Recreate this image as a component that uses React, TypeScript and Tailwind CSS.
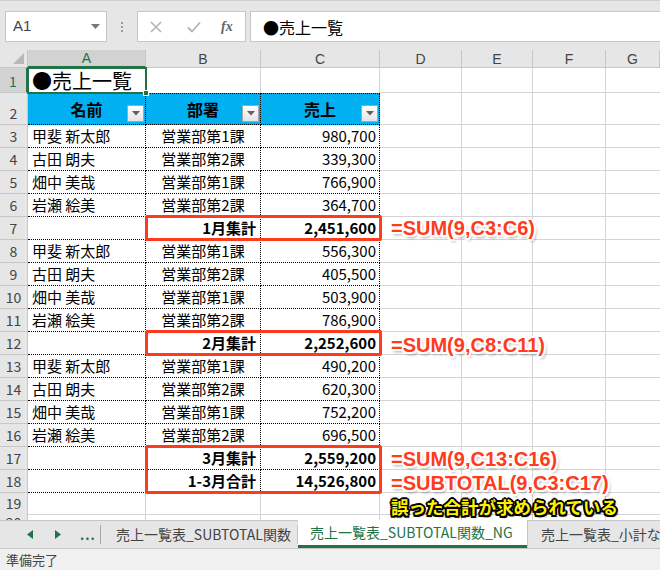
import React from 'react';

type Row = {
    n: number;
    h: string;
    a?: string;
    b?: string;
    c?: string;
    kind: 'title' | 'head' | 'data' | 'total' | 'blank';
};

const rows: Row[] = [
    { n: 1, h: 'h-[25px]', kind: 'title' },
    { n: 2, h: 'h-[32px]', kind: 'head', a: '名前', b: '部署', c: '売上' },
    { n: 3, h: 'h-[23px]', kind: 'data', a: '甲斐 新太郎', b: '営業部第1課', c: '980,700' },
    { n: 4, h: 'h-[23px]', kind: 'data', a: '古田 朗夫', b: '営業部第2課', c: '339,300' },
    { n: 5, h: 'h-[23px]', kind: 'data', a: '畑中 美哉', b: '営業部第1課', c: '766,900' },
    { n: 6, h: 'h-[23px]', kind: 'data', a: '岩瀬 絵美', b: '営業部第2課', c: '364,700' },
    { n: 7, h: 'h-[23px]', kind: 'total', b: '1月集計', c: '2,451,600' },
    { n: 8, h: 'h-[23px]', kind: 'data', a: '甲斐 新太郎', b: '営業部第1課', c: '556,300' },
    { n: 9, h: 'h-[23px]', kind: 'data', a: '古田 朗夫', b: '営業部第2課', c: '405,500' },
    { n: 10, h: 'h-[23px]', kind: 'data', a: '畑中 美哉', b: '営業部第1課', c: '503,900' },
    { n: 11, h: 'h-[23px]', kind: 'data', a: '岩瀬 絵美', b: '営業部第2課', c: '786,900' },
    { n: 12, h: 'h-[23px]', kind: 'total', b: '2月集計', c: '2,252,600' },
    { n: 13, h: 'h-[23px]', kind: 'data', a: '甲斐 新太郎', b: '営業部第1課', c: '490,200' },
    { n: 14, h: 'h-[23px]', kind: 'data', a: '古田 朗夫', b: '営業部第2課', c: '620,300' },
    { n: 15, h: 'h-[23px]', kind: 'data', a: '畑中 美哉', b: '営業部第1課', c: '752,200' },
    { n: 16, h: 'h-[23px]', kind: 'data', a: '岩瀬 絵美', b: '営業部第2課', c: '696,500' },
    { n: 17, h: 'h-[23px]', kind: 'total', b: '3月集計', c: '2,559,200' },
    { n: 18, h: 'h-[23px]', kind: 'total', b: '1-3月合計', c: '14,526,800' },
    { n: 19, h: 'h-[18px]', kind: 'blank' },
    { n: 20, h: 'h-[23px]', kind: 'blank' },
];

const cols = ['A', 'B', 'C', 'D', 'E', 'F', 'G'];

const grid = 'grid grid-cols-[28px_118px_115px_119px_82px_71px_73px_1fr]';

function FilterButton() {
    return (
        <div className="absolute right-[1px] bottom-[2px] w-[17px] h-[17px] border border-[#a6a6a6] bg-gradient-to-b from-white to-[#e4e4e4] flex items-center justify-center">
            <svg width="8" height="5" viewBox="0 0 8 5">
                <path d="M0 0h8L4 4.5z" fill="#5f5f5f" />
            </svg>
        </div>
    );
}

function SheetRow({ row }: { row: Row }) {
    const inTable = row.kind === 'head' || row.kind === 'data' || row.kind === 'total';
    const selected = row.n === 1;
    const gray = 'border-r border-b border-[#d4d4d4]';
    const dotted = 'border-r border-b border-dotted border-black';
    const tableCell = row.kind === 'head' ? `${dotted} border-t bg-[#00b0f0]` : dotted;

    return (
        <div className={`${grid} ${row.h}`}>
            <div
                className={`flex items-end justify-center pb-[1px] text-[14px] leading-[20px] border-b border-[#c6c6c6] ${
                    selected
                        ? 'bg-[#d2d2d2] text-[#217346] border-r-2 border-r-[#217346]'
                        : 'bg-[#e6e6e6] text-[#444] border-r border-r-[#c6c6c6]'
                }`}
            >
                {row.n}
            </div>

            {/* A */}
            {row.kind === 'title' ? (
                <div className="border-r border-[#d4d4d4] flex items-end pl-[4px] text-[20px] leading-[24px] text-black">
                    ●売上一覧
                </div>
            ) : inTable ? (
                <div className={`${tableCell} relative flex items-end text-[15px] leading-[20px] pb-[1px] ${row.kind === 'head' ? 'justify-center font-bold text-[16px] pb-[5px]' : 'pl-[4px]'}`}>
                    {row.a}
                    {row.kind === 'head' && <FilterButton />}
                </div>
            ) : (
                <div className={gray} />
            )}

            {/* B */}
            {row.kind === 'title' ? (
                <div className="border-r border-[#d4d4d4]" />
            ) : inTable ? (
                <div
                    className={`${tableCell} relative flex items-end text-[15px] leading-[20px] pb-[1px] ${
                        row.kind === 'head'
                            ? 'justify-center font-bold text-[16px] pb-[5px]'
                            : row.kind === 'total'
                              ? 'justify-end pr-[4px] font-bold'
                              : 'justify-center'
                    }`}
                >
                    {row.b}
                    {row.kind === 'head' && <FilterButton />}
                </div>
            ) : (
                <div className={gray} />
            )}

            {/* C */}
            {row.kind === 'title' ? (
                <div className="border-r border-[#d4d4d4]" />
            ) : inTable ? (
                <div
                    className={`${tableCell} relative flex items-end text-[15px] leading-[20px] pb-[1px] ${
                        row.kind === 'head'
                            ? 'justify-center font-bold text-[16px] pb-[5px]'
                            : `justify-end pr-[3px] ${row.kind === 'total' ? 'font-bold' : ''}`
                    }`}
                >
                    {row.c}
                    {row.kind === 'head' && <FilterButton />}
                </div>
            ) : (
                <div className={gray} />
            )}

            <div className={gray} />
            <div className={gray} />
            <div className={gray} />
            <div className="border-b border-[#d4d4d4]" />
        </div>
    );
}

const redText =
    'text-[20px] leading-[24px] font-bold text-[#ff3b1d] font-["Liberation_Sans",sans-serif] whitespace-nowrap [text-shadow:-2px_0_0_#fff,2px_0_0_#fff,0_-2px_0_#fff,0_2px_0_#fff,-1.5px_-1.5px_0_#fff,1.5px_1.5px_0_#fff,-1.5px_1.5px_0_#fff,1.5px_-1.5px_0_#fff,2px_3px_3px_rgba(0,0,0,0.35)]';

export default function App() {
    return (
        <div className="w-[660px] h-[570px] overflow-hidden flex flex-col bg-white font-['Noto_Sans_CJK_JP',sans-serif] text-black">
            {/* formula bar */}
            <div className="h-[50px] shrink-0 bg-[#e6e6e6] border-t border-[#d0d0d0] flex items-start pt-[10px] pl-[5px]">
                <div className="w-[102px] h-[31px] bg-white border border-[#c6c6c6] flex items-center justify-between pl-[7px] pr-[6px]">
                    <span className="text-[15px] text-[#444] font-['Liberation_Sans',sans-serif]">A1</span>
                    <svg width="9" height="5" viewBox="0 0 9 5">
                        <path d="M0 0h9L4.5 5z" fill="#777" />
                    </svg>
                </div>
                <div className="w-[30px] h-[31px] flex flex-col items-center justify-center gap-[2px]">
                    <span className="w-[2px] h-[2px] bg-[#9a9a9a]" />
                    <span className="w-[2px] h-[2px] bg-[#9a9a9a]" />
                    <span className="w-[2px] h-[2px] bg-[#9a9a9a]" />
                </div>
                <div className="w-[109px] h-[31px] bg-white border border-[#c6c6c6] flex items-center pl-[12px]">
                    <svg width="12" height="12" viewBox="0 0 12 12" className="mr-[25px]">
                        <path d="M1 1l10 10M11 1L1 11" stroke="#b4b4b4" strokeWidth="1.6" />
                    </svg>
                    <svg width="14" height="12" viewBox="0 0 14 12" className="mr-[20px]">
                        <path d="M1 6.5l4 4L13 1.5" stroke="#b4b4b4" strokeWidth="1.8" fill="none" />
                    </svg>
                    <span className="text-[14px] italic font-['Liberation_Serif',serif] text-[#666] font-bold">fx</span>
                </div>
                <div className="flex-1 h-[31px] ml-[4px] bg-white border border-r-0 border-[#c6c6c6] flex items-center pl-[12px] text-[16px] text-black">
                    ●売上一覧
                </div>
            </div>

            {/* sheet */}
            <div className="relative h-[470px] shrink-0 overflow-hidden bg-white">
                <div className={`${grid} h-[18px]`}>
                    <div className="bg-[#e6e6e6] border-r border-b border-[#c6c6c6] relative">
                        <svg width="11" height="11" viewBox="0 0 11 11" className="absolute right-[3px] bottom-[3px]">
                            <path d="M11 0v11H0z" fill="#b8b8b8" />
                        </svg>
                    </div>
                    {cols.map((c) => (
                        <div
                            key={c}
                            className={`flex items-center justify-center text-[14px] leading-[16px] font-['Liberation_Sans',sans-serif] ${
                                c === 'A'
                                    ? 'bg-[#d2d2d2] text-[#217346] border-r border-r-[#c6c6c6] border-b-2 border-b-[#217346]'
                                    : 'bg-[#e6e6e6] text-[#444] border-r border-b border-[#c6c6c6]'
                            }`}
                        >
                            {c}
                        </div>
                    ))}
                </div>
                {rows.map((r) => (
                    <SheetRow key={r.n} row={r} />
                ))}

                {/* active cell */}
                <div className="absolute left-[27px] top-[17px] w-[120px] h-[27px] border-2 border-[#217346]" />
                <div className="absolute left-[143px] top-[40px] w-[6px] h-[6px] bg-[#217346] border border-white" />

                {/* highlight boxes */}
                <div className="absolute left-[145px] top-[165px] w-[237px] h-[26px] border-[3px] border-[#ff3b1d] rounded-[2px]" />
                <div className="absolute left-[145px] top-[280px] w-[237px] h-[26px] border-[3px] border-[#ff3b1d] rounded-[2px]" />
                <div className="absolute left-[145px] top-[395px] w-[237px] h-[49px] border-[3px] border-[#ff3b1d] rounded-[2px]" />

                {/* notes */}
                <div className={`absolute left-[391px] top-[166px] ${redText}`}>=SUM(9,C3:C6)</div>
                <div className={`absolute left-[391px] top-[283px] ${redText}`}>=SUM(9,C8:C11)</div>
                <div className={`absolute left-[391px] top-[397px] ${redText}`}>=SUM(9,C13:C16)</div>
                <div className={`absolute left-[391px] top-[421px] ${redText}`}>=SUBTOTAL(9,C3:C17)</div>
                <div className="absolute left-[391px] top-[446px] text-[17.5px] leading-[22px] font-bold text-[#fff200] whitespace-nowrap [text-shadow:-2px_0_0_#000,2px_0_0_#000,0_-2px_0_#000,0_2px_0_#000,-1.5px_-1.5px_0_#000,1.5px_1.5px_0_#000,-1.5px_1.5px_0_#000,1.5px_-1.5px_0_#000,2px_2px_2px_rgba(0,0,0,0.4)]">
                    誤った合計が求められている
                </div>
            </div>

            {/* sheet tabs */}
            <div className="h-[28px] shrink-0 bg-[#e6e6e6] border-t border-[#c6c6c6] flex items-stretch text-[14px] whitespace-nowrap">
                <div className="w-[100px] flex items-center pl-[27px]">
                    <svg width="6" height="9" viewBox="0 0 6 9" className="mr-[22px]">
                        <path d="M6 0v9L0 4.5z" fill="#217346" />
                    </svg>
                    <svg width="6" height="9" viewBox="0 0 6 9" className="mr-[19px]">
                        <path d="M0 0v9l6-4.5z" fill="#217346" />
                    </svg>
                    <span className="text-[#217346] font-bold tracking-[1px] text-[13px]">...</span>
                </div>
                <div className="w-[198px] border-l border-[#a8a8a8] my-[4px] flex items-center pl-[15px] text-[#444] border-r border-r-[#c6c6c6]">
                    売上一覧表_SUBTOTAL関数
                </div>
                <div className="w-[229px] bg-white -mt-[1px] border-b-[3px] border-[#217346] flex items-center pl-[12px] text-[#217346]">
                    売上一覧表_SUBTOTAL関数_NG
                </div>
                <div className="flex-1 min-w-0 border-l border-[#c6c6c6] flex items-center pl-[13px] text-[#444] overflow-hidden">
                    売上一覧表_小計なし
                </div>
            </div>

            {/* status */}
            <div className="flex-1 bg-[#f0f0f0] border-t border-[#c6c6c6] flex items-center pl-[6px] text-[13px] text-[#444]">
                準備完了
            </div>
        </div>
    );
}
